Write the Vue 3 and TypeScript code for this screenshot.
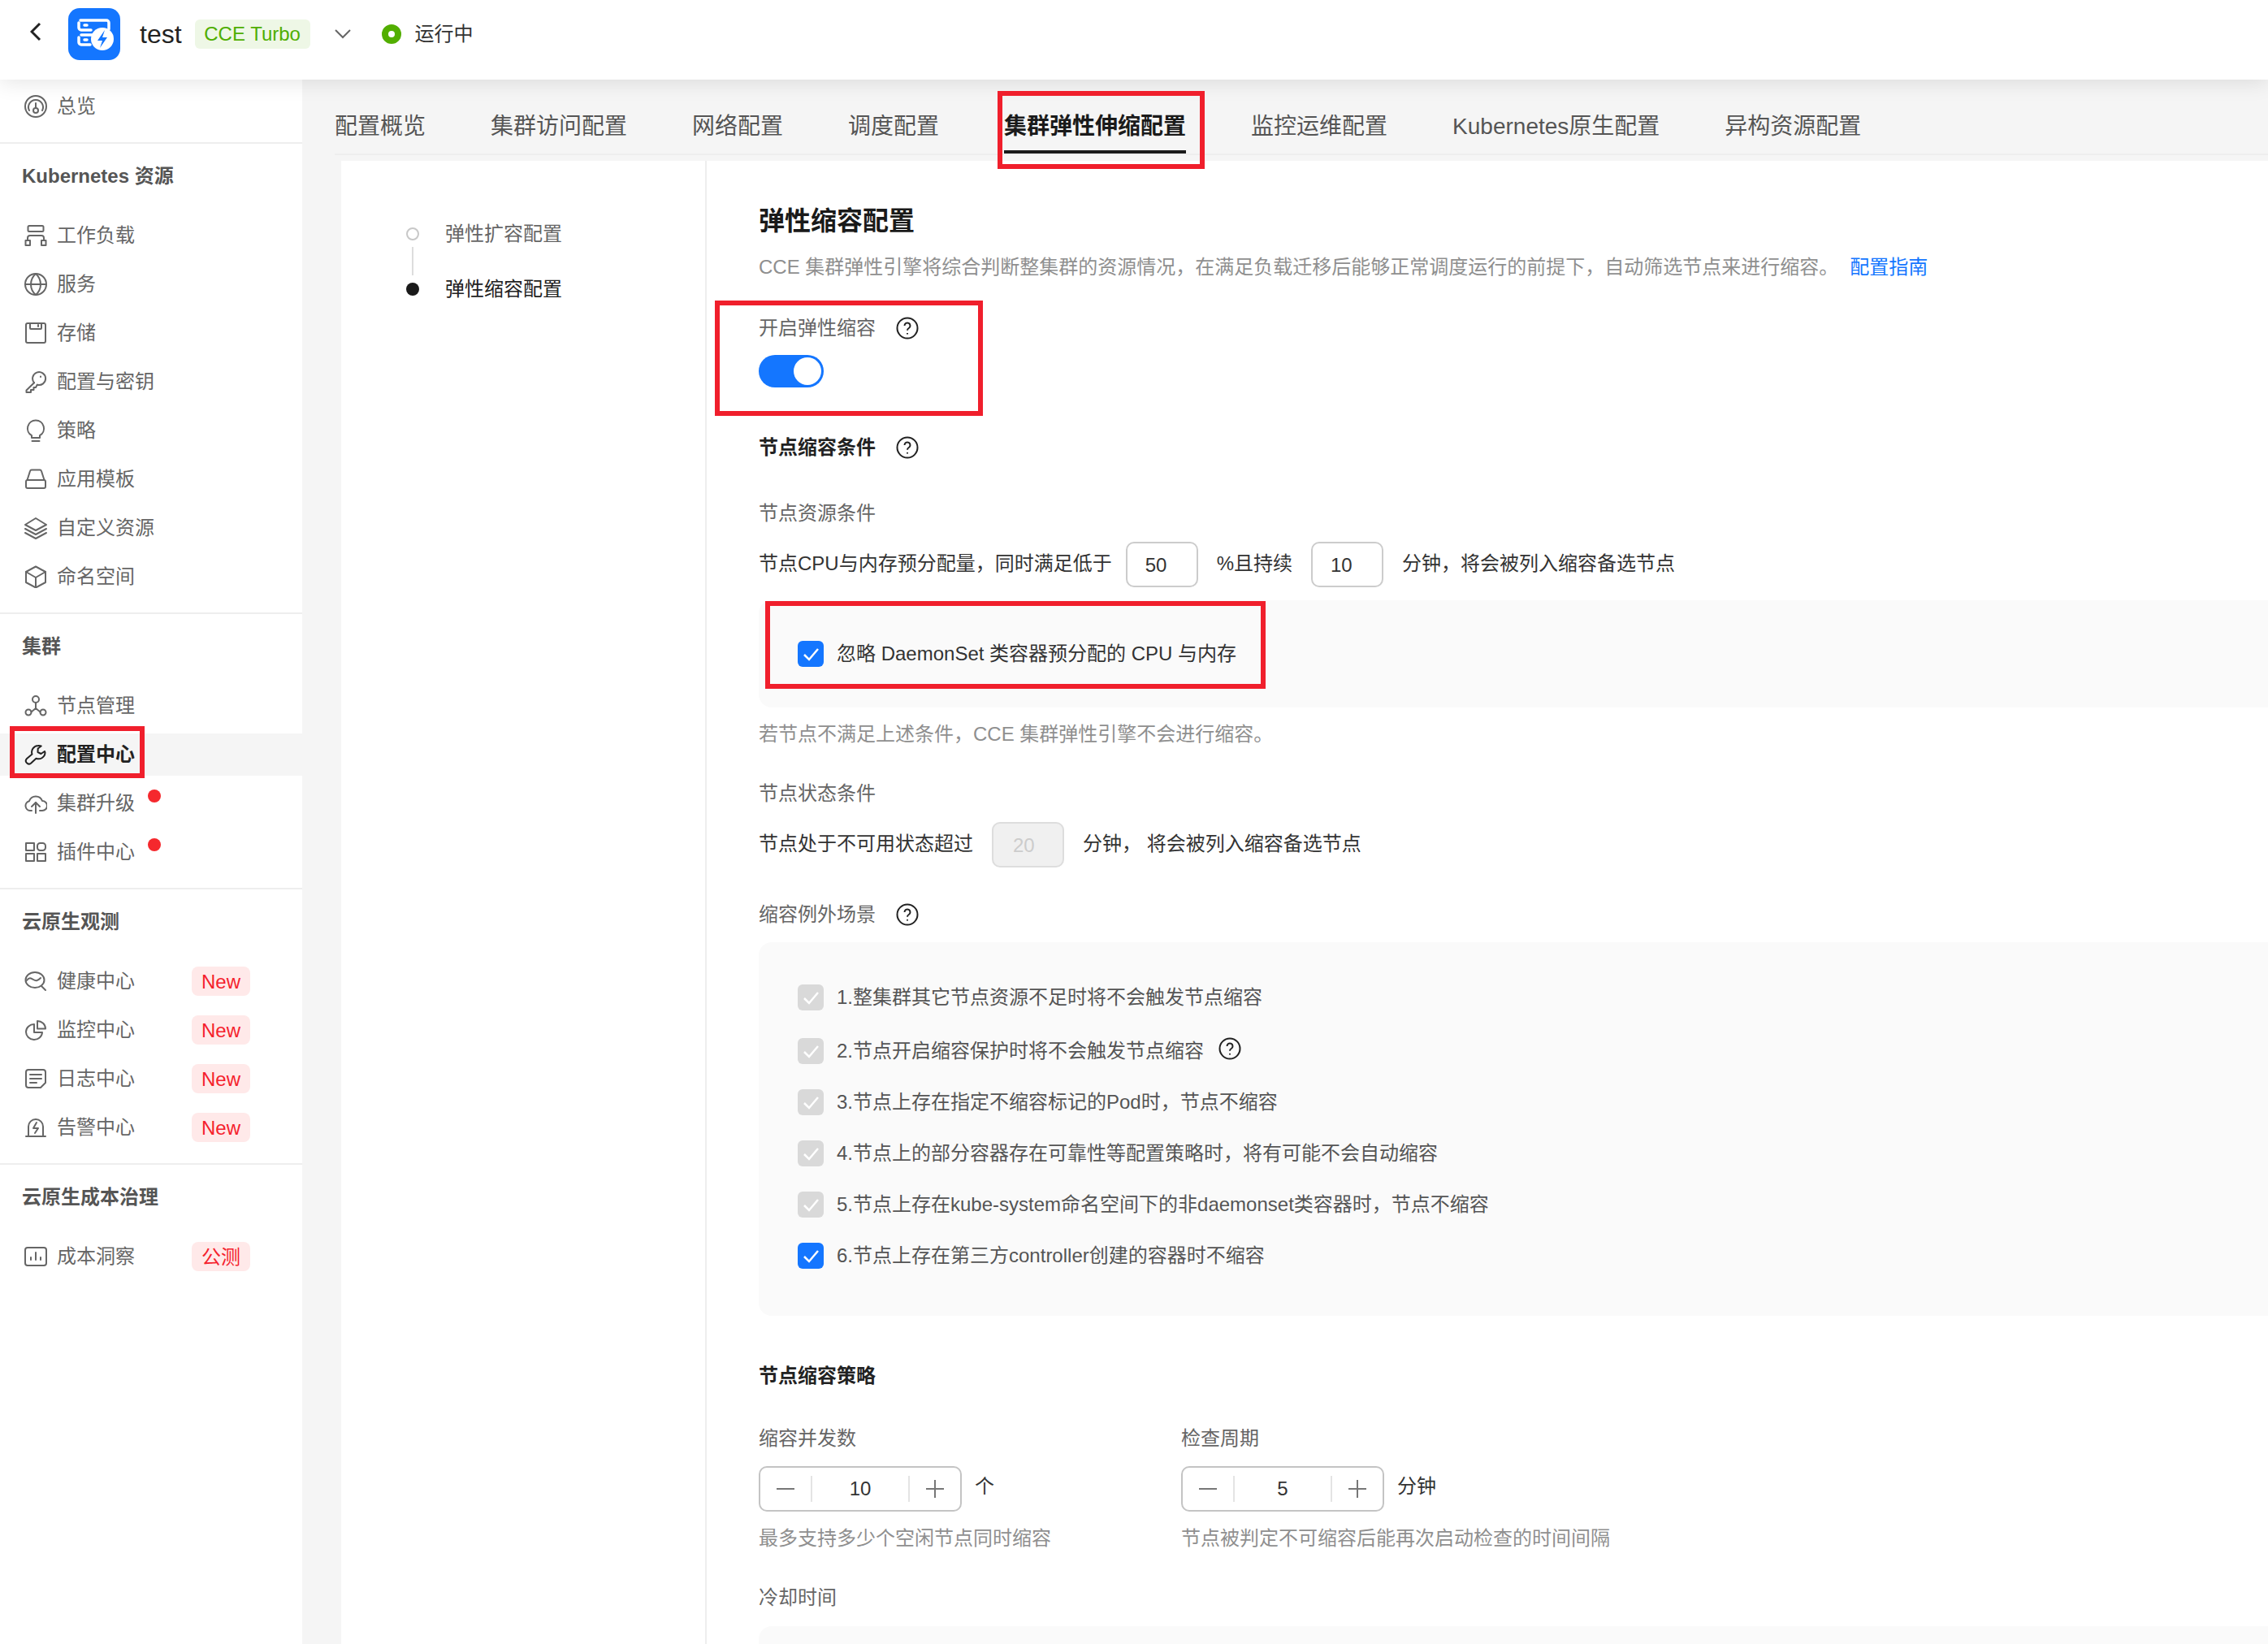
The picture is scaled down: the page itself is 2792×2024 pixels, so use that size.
<script setup lang="ts">
interface NavItem { label: string; icon: string[]; badge?: string; dot?: boolean; active?: boolean }
interface NavGroup { title?: string; items: NavItem[] }

const circle = (cx: number, cy: number, r: number) =>
  `M${cx} ${cy - r}a${r} ${r} 0 1 0 0 ${2 * r}a${r} ${r} 0 1 0 0 ${-2 * r}`

const groups: NavGroup[] = [
  { items: [{ label: '总览', icon: [circle(14, 14, 13), 'M6 19a9 9 0 1 1 16 0', 'M14 10v6', circle(14, 19, 3)] }] },
  {
    title: 'Kubernetes 资源',
    items: [
      { label: '工作负载', icon: ['M6 2h16a1.5 1.5 0 0 1 1.500 1.500v4a1.500 1.500 0 0 1-1.500 1.500H6a1.500 1.500 0 0 1-1.500-1.500v-4A1.500 1.500 0 0 1 6 2', 'M4 20v-3a3 3 0 0 1 3-3h14a3 3 0 0 1 3 3v3', 'M1.500 20h5.500v6H1.500z', 'M21 20h5.500v6H21z'] },
      { label: '服务', icon: [circle(14, 14, 13), 'M14 1c-8 7-8 19 0 26c8-7 8-19 0-26', 'M1 14h26'] },
      { label: '存储', icon: ['M4 2h20a2 2 0 0 1 2 2v20a2 2 0 0 1-2 2H4a2 2 0 0 1-2-2V4a2 2 0 0 1 2-2', 'M7 2v6a1 1 0 0 0 1 1h12a1 1 0 0 0 1-1V2', 'M17 4v2'] },
      { label: '配置与密钥', icon: ['M12 15.200A8 8 0 1 1 15.800 17.700', 'M12 15.200L2.500 24.500V27H8v-3h3.500v-3H14l1.800-3.300', 'M20 7.500v.5'] },
      { label: '策略', icon: ['M14 1.500a10 10 0 0 0-5 18.700V23h10v-2.800a10 10 0 0 0-5-18.700', 'M9.500 27h9'] },
      { label: '应用模板', icon: ['M3.500 15L7 4a2 2 0 0 1 2-1.500h10a2 2 0 0 1 2 1.500l3.500 11', 'M4 15h20a2 2 0 0 1 2 2v6a2 2 0 0 1-2 2H4a2 2 0 0 1-2-2v-6a2 2 0 0 1 2-2'] },
      { label: '自定义资源', icon: ['M14 2L27 10L14 17L1 10z', 'M1 15l13 7 13-7', 'M1 20l13 7 13-7'] },
      { label: '命名空间', icon: ['M14 1.500L26 8v13l-12 6.500L2 21V8z', 'M2 8l12 7 12-7', 'M14 15v12.500'] },
    ],
  },
  {
    title: '集群',
    items: [
      { label: '节点管理', icon: [circle(14, 6, 4), circle(5, 22, 3.5), circle(23, 22, 3.5), 'M14 10v7', 'M8.500 21.500L14 17l5.500 4.500'] },
      { label: '配置中心', active: true, icon: ['M17 3a8 8 0 0 0-7.500 10.500L3 19a3.800 3.800 0 0 0 5 5.700l6.500-6a8 8 0 0 0 11-7.200l-.5-1.500-4.500 3-4-2 .2-4.500 4-3A8 8 0 0 0 17 3z'] },
      { label: '集群升级', dot: true, icon: ['M9 23H7a6 6 0 0 1-1-11.800 8.500 8.500 0 0 1 16-.2 6 6 0 0 1 0 12h-3', 'M14 26V13', 'M9 18l5-5 5 5'] },
      { label: '插件中心', dot: true, icon: ['M2 3h10v9H2z', 'M19.500 3h3a3.500 3.500 0 0 1 3.500 3.500v2a3.500 3.500 0 0 1-3.500 3.500h-3a3.500 3.500 0 0 1-3.500-3.500v-2a3.500 3.500 0 0 1 3.500-3.500', 'M2 16h10v9H2z', 'M16 16h10v9H16z'] },
    ],
  },
  {
    title: '云原生观测',
    items: [
      { label: '健康中心', badge: 'New', icon: ['M13 3a11.500 9.500 0 1 0 0 19a11.500 9.500 0 1 0 0-19', 'M3 13c3-4 5-3 8-1s5 2 9-2', 'M21 20l5 5'] },
      { label: '监控中心', badge: 'New', icon: ['M12 7a10 9.500 0 1 0 10 10H12z', 'M16 3a10 9.500 0 0 1 10 9.500H16z'] },
      { label: '日志中心', badge: 'New', icon: ['M5 3h18a3 3 0 0 1 3 3v13l-6 6H5a3 3 0 0 1-3-3V6a3 3 0 0 1 3-3z', 'M7 9h14', 'M7 14h14', 'M7 19h8'] },
      { label: '告警中心', badge: 'New', icon: ['M5 24V13a9 9 0 0 1 18 0v11', 'M2 25h24', 'M15 8l-4 7h6l-4 6'] },
    ],
  },
  {
    title: '云原生成本治理',
    items: [{ label: '成本洞察', badge: '公测', icon: ['M4 3h20a3 3 0 0 1 3 3v16a3 3 0 0 1-3 3H4a3 3 0 0 1-3-3V6a3 3 0 0 1 3-3', 'M8 18v-3', 'M14 18V9', 'M20 18v-3'] }] },
]

const tabs = ['配置概览', '集群访问配置', '网络配置', '调度配置', '集群弹性伸缩配置', '监控运维配置', 'Kubernetes原生配置', '异构资源配置']

const exceptions = [
  { text: '1.整集群其它节点资源不足时将不会触发节点缩容', locked: true },
  { text: '2.节点开启缩容保护时将不会触发节点缩容', locked: true, help: true },
  { text: '3.节点上存在指定不缩容标记的Pod时，节点不缩容', locked: true },
  { text: '4.节点上的部分容器存在可靠性等配置策略时，将有可能不会自动缩容', locked: true },
  { text: '5.节点上存在kube-system命名空间下的非daemonset类容器时，节点不缩容', locked: true },
  { text: '6.节点上存在第三方controller创建的容器时不缩容', locked: false },
]

const steppers = [
  { label: '缩容并发数', value: '10', unit: '个', hint: '最多支持多少个空闲节点同时缩容' },
  { label: '检查周期', value: '5', unit: '分钟', hint: '节点被判定不可缩容后能再次启动检查的时间间隔' },
]
</script>

<template>
  <div class="page">
    <header class="topbar">
      <svg class="back" viewBox="0 0 14 24"><path d="M12 2L2 12l10 10" /></svg>
      <svg class="logo" viewBox="0 0 64 64">
        <rect width="64" height="64" rx="14" fill="#1476ff" />
        <path d="M15 15h32a3 3 0 0 1 3 3v8M13 18v6a3 3 0 0 0 3 3h12M16 33h14M13 36v6a3 3 0 0 0 3 3h11M20 21h3M20 39h3" fill="none" stroke="#fff" stroke-width="3.500" stroke-linecap="round" />
        <circle cx="42" cy="38" r="14" fill="#fff" />
        <path d="M45 27l-9 13h6l-3 9 9-13h-6z" fill="#1476ff" />
      </svg>
      <span class="cluster">test</span>
      <span class="turbo">CCE Turbo</span>
      <svg class="caret" viewBox="0 0 20 12"><path d="M1 1l9 9 9-9" /></svg>
      <span class="status-dot"></span>
      <span class="status">运行中</span>
    </header>

    <div class="body">
      <aside class="sidebar">
        <section v-for="(g, i) in groups" :key="i" class="group" :class="{ first: !g.title, last: i === groups.length - 1 }">
          <h3 v-if="g.title" class="group-title">{{ g.title }}</h3>
          <div class="group-items">
            <div v-for="it in g.items" :key="it.label" class="nav-row" :class="{ active: it.active }">
              <svg class="nav-icon" viewBox="0 0 28 28"><path v-for="d in it.icon" :key="d" :d="d" /></svg>
              <span>{{ it.label }}</span>
              <i v-if="it.dot" class="red-dot"></i>
              <em v-if="it.badge" class="badge">{{ it.badge }}</em>
            </div>
          </div>
        </section>
      </aside>

      <main class="main">
        <nav class="tabs">
          <span v-for="t in tabs" :key="t" class="tab" :class="{ current: t === '集群弹性伸缩配置' }">{{ t }}</span>
        </nav>
        <div class="panel">
          <div class="anchors">
            <div class="anchor linked"><i class="mark hollow"></i><span>弹性扩容配置</span></div>
            <div class="anchor now"><i class="mark solid"></i><span>弹性缩容配置</span></div>
          </div>
          <div class="form">
            <h2 class="title">弹性缩容配置</h2>
            <p class="line desc">CCE 集群弹性引擎将综合判断整集群的资源情况，在满足负载迁移后能够正常调度运行的前提下，自动筛选节点来进行缩容。<a class="guide">配置指南</a></p>

            <div class="line label mt35">开启弹性缩容<svg class="help" viewBox="0 0 28 28"><circle cx="14" cy="14" r="12.500" /><path d="M10.500 11a3.500 3.500 0 1 1 5.300 3c-1.200.7-1.800 1.400-1.800 2.800M14 20v1.500" /></svg></div>
            <div class="switch"><i></i></div>

            <div class="line strong mt54">节点缩容条件<svg class="help" viewBox="0 0 28 28"><circle cx="14" cy="14" r="12.500" /><path d="M10.500 11a3.500 3.500 0 1 1 5.300 3c-1.200.7-1.800 1.400-1.800 2.800M14 20v1.500" /></svg></div>
            <div class="line label mt41">节点资源条件</div>
            <div class="fill-row mt15">
              <span class="copy">节点CPU与内存预分配量，同时满足低于</span>
              <span class="num first-num">50</span>
              <span class="copy">%且持续</span>
              <span class="num">10</span>
              <span class="copy">分钟，将会被列入缩容备选节点</span>
            </div>
            <div class="soft ignore">
              <label class="check-row">
                <i class="check on"><svg viewBox="0 0 32 32"><path d="M8 17l6 6 11-13" /></svg></i>
                <span>忽略 DaemonSet 类容器预分配的 CPU 与内存</span>
              </label>
            </div>
            <p class="line muted mt13">若节点不满足上述条件，CCE 集群弹性引擎不会进行缩容。</p>

            <div class="line label mt33">节点状态条件</div>
            <div class="fill-row mt15">
              <span class="copy">节点处于不可用状态超过</span>
              <span class="num off">20</span>
              <span class="copy">分钟， 将会被列入缩容备选节点</span>
            </div>

            <div class="line label mt38">缩容例外场景<svg class="help" viewBox="0 0 28 28"><circle cx="14" cy="14" r="12.500" /><path d="M10.500 11a3.500 3.500 0 1 1 5.300 3c-1.200.7-1.800 1.400-1.800 2.800M14 20v1.500" /></svg></div>
            <div class="soft exceptions">
              <label v-for="ex in exceptions" :key="ex.text" class="check-row ex">
                <i class="check" :class="ex.locked ? 'locked' : 'on'"><svg viewBox="0 0 32 32"><path d="M8 17l6 6 11-13" /></svg></i>
                <span>{{ ex.text }}</span>
                <svg v-if="ex.help" class="help inline" viewBox="0 0 28 28"><circle cx="14" cy="14" r="12.500" /><path d="M10.500 11a3.500 3.500 0 1 1 5.300 3c-1.200.7-1.800 1.400-1.800 2.800M14 20v1.500" /></svg>
              </label>
            </div>

            <div class="line strong mt54">节点缩容策略</div>
            <div class="columns">
              <div v-for="s in steppers" :key="s.label" class="column">
                <div class="line label">{{ s.label }}</div>
                <div class="stepper-row">
                  <div class="stepper">
                    <svg class="step" viewBox="0 0 24 24"><path d="M1 12h22" /></svg>
                    <span class="stepper-value">{{ s.value }}</span>
                    <svg class="step" viewBox="0 0 24 24"><path d="M1 12h22M12 1v22" /></svg>
                  </div>
                  <span class="unit">{{ s.unit }}</span>
                </div>
                <p class="line muted mt13">{{ s.hint }}</p>
              </div>
            </div>
            <div class="line label mt33">冷却时间</div>
            <div class="soft cooldown"></div>
          </div>
        </div>
      </main>
    </div>

    <div class="mark-box box-tab"></div>
    <div class="mark-box box-switch"></div>
    <div class="mark-box box-ignore"></div>
    <div class="mark-box box-nav"></div>
  </div>
</template>

<style>
html, body { margin: 0; background: #fff; }
</style>

<style scoped>
.page {
  position: relative;
  width: 2792px;
  height: 2024px;
  overflow: hidden;
  display: flex;
  flex-direction: column;
  font-family: "Liberation Sans", "Noto Sans CJK SC", sans-serif;
  font-size: 24px;
  line-height: 40px;
  color: #333;
  background: #fff;
}
h2, h3, p { margin: 0; font-weight: inherit; font-size: inherit; }
i, em { font-style: normal; }

.topbar {
  position: relative;
  z-index: 2;
  flex: none;
  height: 98px;
  box-sizing: border-box;
  display: flex;
  align-items: center;
  padding: 0 0 14px 37px;
  background: #fff;
  box-shadow: 0 4px 24px rgba(0, 0, 0, 0.1);
}
.back { width: 14px; height: 24px; fill: none; stroke: #222; stroke-width: 3; margin-top: -6px; }
.logo { width: 64px; height: 64px; margin-left: 33px; flex: none; }
.cluster { margin-left: 24px; font-size: 32px; color: #222; }
.turbo {
  margin-left: 16px;
  width: 142px;
  height: 36px;
  line-height: 36px;
  text-align: center;
  border-radius: 6px;
  background: #eef7e6;
  color: #4fae00;
}
.caret { width: 20px; height: 12px; margin-left: 30px; fill: none; stroke: #666; stroke-width: 2; }
.status-dot {
  width: 24px;
  height: 24px;
  box-sizing: border-box;
  margin-left: 38px;
  border: 8px solid #52ae00;
  border-radius: 50%;
}
.status { margin-left: 17px; color: #333; }

.body { flex: 1; display: flex; min-height: 0; }

.sidebar { flex: none; width: 372px; background: #fff; color: #666; }
.group { padding: 19px 0 14px; border-bottom: 2px solid #eee; }
.group.first { padding-top: 3px; }
.group.last { border-bottom: none; }
.group-title { height: 40px; line-height: 42px; padding-left: 27px; font-weight: 700; color: #555; }
.group-items { display: flex; flex-direction: column; }
.group-title + .group-items { margin-top: 24px; }
.nav-row {
  height: 60px;
  display: flex;
  align-items: center;
  padding-left: 30px;
}
.nav-row.active {
  background: linear-gradient(#f5f5f5, #f5f5f5) 0 4px / 100% 52px no-repeat;
  color: #222;
  font-weight: 700;
}
.nav-icon { width: 28px; height: 28px; flex: none; margin-right: 12px; fill: none; stroke: #666; stroke-width: 2; stroke-linejoin: round; stroke-linecap: round; }
.active .nav-icon { stroke: #222; }
.red-dot { width: 16px; height: 16px; border-radius: 50%; background: #f5282d; margin: 0 0 18px 16px; }
.badge {
  margin-left: auto;
  margin-right: 64px;
  width: 72px;
  height: 36px;
  line-height: 38px;
  text-align: center;
  border-radius: 8px;
  background: #ffe9e9;
  color: #f5222d;
}

.main { flex: 1; min-width: 0; display: flex; flex-direction: column; background: #f5f5f5; }
.tabs {
  flex: none;
  box-sizing: border-box;
  height: 93px;
  margin-left: 40px;
  padding-top: 38px;
  display: flex;
  gap: 80px;
  border-bottom: 2px solid #eee;
  font-size: 28px;
  color: #555;
}
.tab { height: 53px; box-sizing: border-box; }
.tab.current { color: #1a1a1a; font-weight: 700; border-bottom: 4px solid #1a1a1a; }

.panel { flex: 1; min-height: 0; margin: 7px 0 0 48px; display: flex; background: #fff; }
.anchors { flex: none; box-sizing: border-box; width: 450px; padding: 70px 0 0 80px; border-right: 2px solid #eee; display: flex; flex-direction: column; gap: 28px; }
.anchor { position: relative; height: 40px; display: flex; align-items: center; gap: 32px; color: #666; }
.anchor.now { color: #222; }
.mark { width: 16px; height: 16px; box-sizing: border-box; border-radius: 50%; flex: none; }
.hollow { border: 2px solid #c8c8c8; }
.solid { background: #1a1a1a; }
.linked::after { content: ""; position: absolute; left: 7px; top: 36px; width: 2px; height: 35px; background: #ddd; }

.form { flex: 1; min-width: 0; padding: 53px 0 0 64px; }
.title { height: 40px; line-height: 42px; font-size: 32px; font-weight: 700; color: #1a1a1a; }
.line { display: flex; align-items: center; height: 40px; line-height: 42px; white-space: nowrap; }
.desc { margin-top: 18px; color: #8f8f8f; display: block; line-height: 40px; }
.guide { margin-left: 14px; color: #1476ff; }
.label { color: #666; }
.strong { color: #222; font-weight: 700; }
.muted { color: #8f8f8f; }
.mt13 { margin-top: 13px; }
.mt15 { margin-top: 15px; }
.mt33 { margin-top: 33px; }
.mt35 { margin-top: 35px; }
.mt38 { margin-top: 38px; }
.mt41 { margin-top: 41px; }
.mt54 { margin-top: 54px; }
.help { width: 28px; height: 28px; margin-left: 25px; fill: none; stroke: #222; stroke-width: 2; flex: none; }
.help.inline { margin-left: 18px; margin-top: -6px; }

.switch { width: 80px; height: 40px; margin-top: 13px; border-radius: 20px; background: #1476ff; position: relative; }
.switch i { position: absolute; right: 3px; top: 3px; width: 34px; height: 34px; border-radius: 50%; background: #fff; }

.fill-row { display: flex; align-items: center; height: 56px; white-space: nowrap; color: #333; }
.copy { margin-top: -3px; }
.num {
  box-sizing: border-box;
  width: 89px;
  height: 56px;
  margin: 0 23px;
  padding-left: 22px;
  border: 2px solid #ccc;
  border-radius: 10px;
  line-height: 54px;
  color: #333;
}
.first-num { margin-left: 17px; }
.num.off { background: #f0f0f0; border-color: #ddd; color: #ccc; padding-left: 24px; }

.soft { background: #fafafa; border-radius: 16px 0 0 16px; }
.ignore { height: 132px; margin-top: 16px; display: flex; align-items: center; padding-left: 48px; }
.check-row { display: flex; align-items: center; color: #333; }
.check { width: 32px; height: 32px; margin-right: 16px; flex: none; border-radius: 6px; display: flex; }
.check svg { width: 32px; height: 32px; fill: none; stroke: #fff; stroke-width: 2.500; }
.check.on { background: #1476ff; }
.check.locked { background: #d9d9d9; }
.exceptions { height: 460px; box-sizing: border-box; margin-top: 14px; padding: 50px 0 0 48px; display: flex; flex-direction: column; gap: 27px; }
.ex { height: 36px; color: #555; }
.ex:first-child { margin-bottom: 3px; }

.columns { display: flex; margin-top: 37px; }
.column { width: 520px; }
.stepper-row { display: flex; align-items: center; margin-top: 14px; }
.stepper {
  box-sizing: border-box;
  width: 250px;
  height: 56px;
  display: flex;
  align-items: center;
  border: 2px solid #c4c4c4;
  border-radius: 10px;
  color: #333;
}
.step { flex: none; width: 24px; height: 24px; padding: 0 19px; fill: none; stroke: #777; stroke-width: 2; }
.stepper-value { flex: 1; height: 32px; line-height: 32px; text-align: center; border-left: 2px solid #e4e4e4; border-right: 2px solid #e4e4e4; }
.unit { margin-left: 16px; color: #333; margin-top: -6px; }
.cooldown { height: 200px; margin-top: 15px; }

.mark-box { position: absolute; z-index: 3; box-sizing: border-box; border: 6px solid #f01f2c; }
.box-tab { left: 1228px; top: 112px; width: 255px; height: 96px; }
.box-switch { left: 880px; top: 370px; width: 330px; height: 142px; }
.box-ignore { left: 942px; top: 740px; width: 616px; height: 108px; }
.box-nav { left: 12px; top: 894px; width: 166px; height: 64px; }
</style>
